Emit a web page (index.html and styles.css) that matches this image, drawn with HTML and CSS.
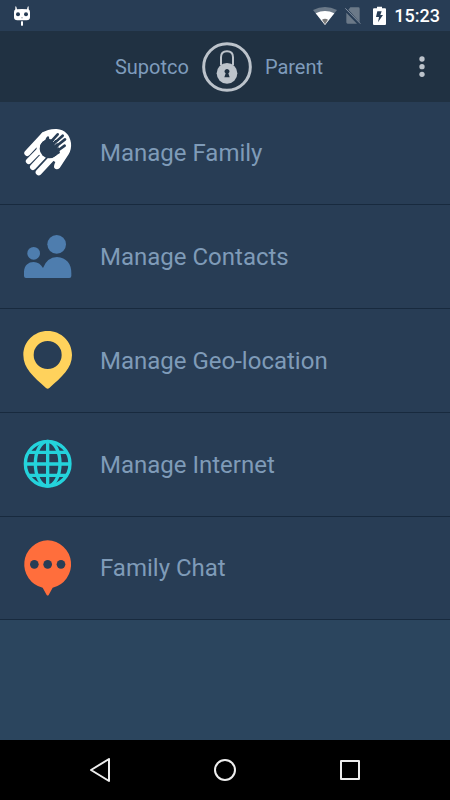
FILE: index.html
```html
<!DOCTYPE html>
<html lang="en">
<head>
  <meta charset="UTF-8" />
  <meta name="viewport" content="width=device-width, initial-scale=1" />
  <title>Supotco Parent</title>
  <link rel="stylesheet" href="styles.css">
</head>
<body>
  <div class="status-bar">
    <svg class="mascot" viewBox="0 0 48 60">
      <path d="M4 1l3 1 2 8q15-2 30 0l2-8 3-1v9q4 3 4 9v15q0 9-10 9H10Q0 43 0 34V19q0-6 4-9z" fill="#fff"/>
      <rect x="21" y="46" width="6" height="13" fill="#fff"/>
      <circle cx="12" cy="25" r="6" fill="#283d55"/>
      <circle cx="36" cy="25" r="6" fill="#283d55"/>
      <circle cx="24" cy="35" r="1.5" fill="#283d55"/>
    </svg>
    <div class="status-icons">
      <svg class="wifi" viewBox="0 0 72 54">
        <path d="M0 9Q36-9 72 9L36 54z" fill="#6b7988"/>
        <path d="M8 19Q36 5 64 19L36 54z" fill="#fff"/>
        <path d="M27 38q9-5 18 0l-9 14z" fill="#777"/>
      </svg>
      <svg class="sim" viewBox="0 0 48 54">
        <path d="M16 1h24q4 0 4 4v41L10 8zM4 17l32 33H8q-4 0-4-4z" fill="#6b7988"/>
        <path d="M1 4l45 46" stroke="#8390a0" stroke-width="3"/>
      </svg>
      <svg class="battery" viewBox="0 0 39 60">
        <path d="M12 2h15v5h9q3 0 3 3v44q0 3-3 3H3q-3 0-3-3V10q0-3 3-3h9z" fill="#fff"/>
        <path d="M13 16h13l-4 11h8L15 49l3-16h-9z" fill="#283d55"/>
      </svg>
      <time>15:23</time>
    </div>
  </div>

  <header class="header">
    <h1 class="title">
      <span>Supotco</span>
      <svg class="logo" viewBox="0 0 150 150" fill="none">
        <circle cx="75" cy="75" r="70" stroke="#bcc3cb" stroke-width="9"/>
        <path d="M57 70V46q0-18 18-18t18 18v24" stroke="#bcc3cb" stroke-width="6"/>
        <circle cx="75" cy="94" r="31" fill="#bcc3cb"/>
        <path d="M71 94a7 7 0 1 1 8 0l4 12H67z" fill="#203142"/>
      </svg>
      <span>Parent</span>
    </h1>
    <button class="more" type="button" aria-label="More options">
      <svg viewBox="0 0 24 72" fill="#bcc3cb">
        <circle cx="12" cy="12" r="8"/>
        <circle cx="12" cy="35" r="8"/>
        <circle cx="12" cy="58" r="8"/>
      </svg>
    </button>
  </header>

  <main class="content">
    <ul class="menu">
      <li>
        <a href="#family">
          <svg class="icon" viewBox="0 0 180 180">
            <!-- large hand with a small hand cut into the palm -->
            <path d="M72 30Q90 17 116 18Q153 22 159 60Q161 78 152 94L125 135Q116 143 109 135Q106 130 112 117L96 108L60 94L52 60z" fill="#fff"/>
            <g stroke="#fff" stroke-width="18" stroke-linecap="round">
              <path d="M78 36L28 90"/>
              <path d="M74 72L32 115" stroke-width="17"/>
              <path d="M86 88L45 132"/>
              <path d="M103 104L62 148"/>
            </g>
            <circle cx="94" cy="77" r="29" fill="#283d55"/>
            <path d="M66 73Q65 62 82 51Q86 39 91 40Q96 43 92 57L115 50L126 90L108 101z" fill="#283d55"/>
            <g stroke="#283d55" stroke-width="8" stroke-linecap="round">
              <path d="M97 58L119 34"/>
              <path d="M106 64L134 38"/>
              <path d="M112 72L141 49"/>
              <path d="M118 84L140 68"/>
            </g>
            <path d="M105 57L124 38M110 65L135 45M119 74L139 60" stroke="#fff" stroke-width="2"/>
          </svg>
          <span>Manage Family</span>
        </a>
      </li>
      <li>
        <a href="#contacts">
          <svg class="icon" viewBox="24 21 180 180" fill="#4e7dae">
            <circle cx="140" cy="73" r="28"/>
            <circle cx="71" cy="100" r="19"/>
            <path d="M42 168V155C43 136 55 126 71 126Q89 126 99 144Q111 112 141 111Q184 115 184 160V168Q184 174 178 174H48Q42 174 42 168z"/>
          </svg>
          <span>Manage Contacts</span>
        </a>
      </li>
      <li>
        <a href="#location">
          <svg class="icon" viewBox="24 33 180 180">
            <path d="M113 33C72 33 40 65 40 105C40 145 70 170 108 204Q113 208 118 204C156 170 186 145 186 105C186 65 154 33 113 33zM113 63a42 42 0 1 1 0 84a42 42 0 1 1 0-84z" fill="#ffd25c" fill-rule="evenodd"/>
          </svg>
          <span>Manage Geo-location</span>
        </a>
      </li>
      <li>
        <a href="#internet">
          <svg class="icon" viewBox="24 30 180 180" fill="none" stroke="#24d3dc" stroke-width="10">
            <circle cx="113" cy="116" r="67"/>
            <ellipse cx="113" cy="116" rx="37" ry="67"/>
            <path d="M113 49V183M46 117H180M55 82H171M55 151H171"/>
          </svg>
          <span>Manage Internet</span>
        </a>
      </li>
      <li>
        <a href="#chat">
          <svg class="icon" viewBox="24 23 180 180">
            <path d="M113 30a72 72 0 0 1 15 142L116 194Q113 197 110 194L98 172A72 72 0 0 1 113 30z" fill="#ff6e3c"/>
            <g fill="#283d55">
              <circle cx="73" cy="102" r="13"/>
              <circle cx="113" cy="102" r="13"/>
              <circle cx="153" cy="102" r="13"/>
            </g>
          </svg>
          <span>Family Chat</span>
        </a>
      </li>
    </ul>
  </main>

  <nav class="nav-bar">
    <button type="button" aria-label="Back">
      <svg viewBox="0 0 24 24"><path d="M21 1v22L3 12z"/></svg>
    </button>
    <button type="button" aria-label="Home">
      <svg viewBox="0 0 24 24"><circle cx="12" cy="12" r="10"/></svg>
    </button>
    <button type="button" aria-label="Recent apps">
      <svg viewBox="0 0 24 24"><rect x="3" y="3" width="18" height="18"/></svg>
    </button>
  </nav>
</body>
</html>
```

FILE: styles.css
```css
* {
  box-sizing: border-box;
}

body {
  margin: 0;
  min-height: 100vh;
  display: flex;
  flex-direction: column;
  font-family: Roboto, sans-serif;
  background-color: #2b455e;
  color: #7f9cbc;
}

svg {
  display: block;
  flex-shrink: 0;
}

button {
  display: flex;
  align-items: center;
  justify-content: center;
  padding: 0;
  border: none;
  background: none;
  cursor: pointer;
}

.status-bar {
  display: flex;
  align-items: center;
  justify-content: space-between;
  height: 31px;
  padding: 0 10px 0 14px;
  background-color: #283d55;
  color: #fff;
}

.status-icons {
  display: flex;
  align-items: center;
  gap: 8px;
  font-size: 18px;
  font-weight: 500;
}

.mascot {
  width: 16px;
  height: 20px;
}

.wifi {
  width: 24px;
  height: 18px;
}

.sim {
  width: 16px;
  height: 18px;
}

.battery {
  width: 13px;
  height: 20px;
  margin-left: 4px;
}

.header {
  display: flex;
  align-items: center;
  height: 71px;
  padding: 0 6px 0 38px;
  background-color: #203142;
}

.title {
  flex: 1;
  display: flex;
  align-items: center;
  justify-content: center;
  gap: 13px;
  margin: 0;
  font-size: 20px;
  font-weight: 400;
}

.logo {
  width: 50px;
  height: 50px;
}

.more {
  width: 44px;
  height: 44px;
}

.more svg {
  width: 8px;
  height: 24px;
}

.content {
  flex: 1;
}

.menu {
  list-style: none;
  margin: 0;
  padding: 0;
}

.menu a {
  display: flex;
  align-items: center;
  gap: 22px;
  min-height: 104px;
  padding: 0 18px;
  background-color: #283d55;
  border-bottom: 1px solid #182a3e;
  color: #7f9bb8;
  font-size: 24px;
  text-decoration: none;
}

.menu li:first-child a,
.menu li:last-child a {
  min-height: 103px;
}

.icon {
  width: 60px;
  height: 60px;
}

.nav-bar {
  display: flex;
  justify-content: center;
  height: 60px;
  background-color: #000;
}

.nav-bar button {
  width: 125px;
}

.nav-bar svg {
  width: 24px;
  height: 24px;
  fill: none;
  stroke: #eee;
  stroke-width: 2;
  stroke-linejoin: round;
}
```
